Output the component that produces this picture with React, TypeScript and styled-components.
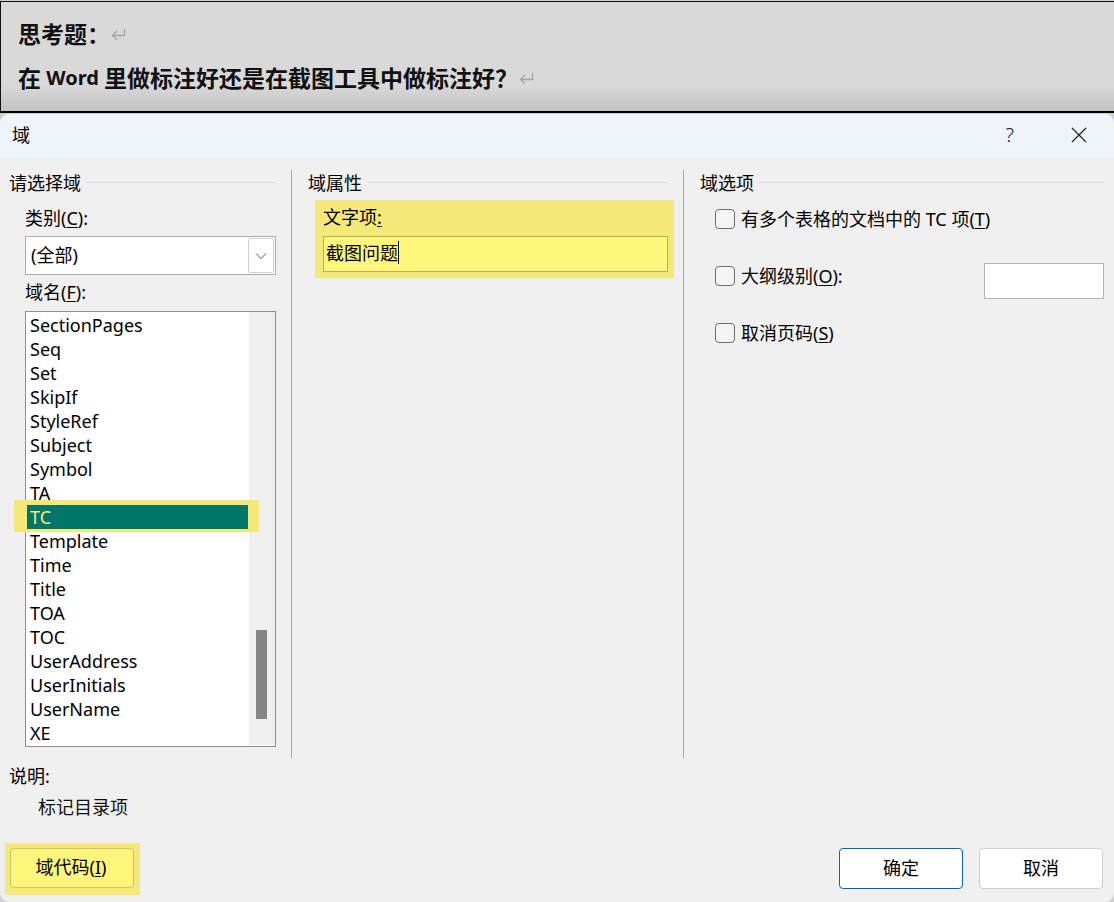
import React from 'react';
import styled, { createGlobalStyle } from 'styled-components';

const sans = `"Noto Sans", "Noto Sans CJK SC", sans-serif`;
const cjk = `"Noto Sans CJK SC", "Noto Sans", sans-serif`;

const Global = createGlobalStyle`
  html, body { margin: 0; padding: 0; background: #cfcfcf; overflow: hidden; }
  * { box-sizing: border-box; }
  #root { width: 1114px; height: 902px; }
`;

const Page = styled.div`
  width: 1114px;
  height: 902px;
  display: flex;
  flex-direction: column;
  font-family: ${sans};
  font-size: 18px;
  color: #000;
`;

const DocStrip = styled.section`
  height: 112px;
  flex: none;
  margin-top: 1px;
  padding: 9px 0 0 17px;
  border-top: 1px solid #111;
  border-left: 1px solid #111;
  border-bottom: 2px solid #000;
  background: linear-gradient(#d9d9d9 0, #d9d9d9 76%, #c3c3c3 100%);
`;

const DocLine = styled.div`
  height: 44px;
  display: flex;
  align-items: center;
  font-family: ${cjk};
  font-size: 23px;
  font-weight: 700;
  color: #111;
  white-space: pre;
`;

const DocLatin = styled.span`
  font-family: ${sans};
  font-size: 20px;
`;

const ReturnMark = styled.svg`
  flex: none;
  margin: 3px 0 0 1px;
`;

const Return = () => (
  <ReturnMark width="15" height="14" viewBox="0 0 15 14" fill="none" stroke="#a3a3a3" strokeWidth="1.3">
    <path d="M13.5 1V7.5H1.5" />
    <path d="M6 3L1.5 7.5L6 12" />
  </ReturnMark>
);

const Dialog = styled.main`
  flex: 1;
  margin-top: 1px;
  background: #f0f0f0;
  border-radius: 9px;
  display: flex;
  flex-direction: column;
  overflow: hidden;
`;

const TitleBar = styled.header`
  height: 44px;
  flex: none;
  display: flex;
  align-items: center;
  padding: 0 27px 2px 12px;
  background: #eff3fa;
  font-family: ${cjk};
  font-size: 18px;
`;

const TitleText = styled.span`
  flex: 1;
  padding-bottom: 2px;
`;

const HelpMark = styled.span`
  font-family: ${sans};
  font-size: 20px;
  font-weight: 300;
  margin-right: 57px;
  padding-bottom: 2px;
  color: #222;
`;

const Columns = styled.div`
  margin-top: 12px;
  height: 588px;
  flex: none;
  display: grid;
  grid-template-columns: 292px 392px 1fr;
`;

const Column = styled.div<{ $pad: string; $divider?: boolean }>`
  padding: ${p => p.$pad};
  border-right: ${p => (p.$divider ? '1px solid #a6a6a6' : 'none')};
  display: flex;
  flex-direction: column;
`;

const GroupTitle = styled.div`
  height: 24px;
  flex: none;
  display: flex;
  align-items: center;
  gap: 5px;
  font-family: ${cjk};
  font-size: 18px;
  white-space: nowrap;
  &::after {
    content: '';
    flex: 1;
    height: 1px;
    background: #dddddd;
  }
`;

const FieldLabel = styled.div<{ $top?: number }>`
  height: 24px;
  flex: none;
  line-height: 22px;
  margin-top: ${p => p.$top ?? 0}px;
  font-size: 18px;
  white-space: nowrap;
`;

const Indent = styled.div`
  margin-left: 16px;
  display: flex;
  flex-direction: column;
`;

const Select = styled.div`
  margin-top: 5px;
  height: 39px;
  background: #fff;
  border: 1px solid #ababab;
  display: flex;
  align-items: center;
  justify-content: space-between;
  padding: 1px 1px 1px 5px;
  font-size: 18px;
`;

const SelectValue = styled.span`
  padding-bottom: 4px;
`;

const SelectButton = styled.span`
  width: 26px;
  height: 35px;
  border: 1px solid #d0d0d0;
  border-radius: 2px;
  display: flex;
  align-items: center;
  justify-content: center;
`;

const List = styled.div`
  position: relative;
  margin-top: 6px;
  height: 436px;
  padding: 1px 27px 0 1px;
  background: #fff;
  border: 1px solid #8d8d96;
`;

const ListTrack = styled.div`
  position: absolute;
  top: 0;
  right: 0;
  bottom: 1px;
  width: 26px;
  background: #f0f0f0;
`;

const ListThumb = styled.div`
  position: absolute;
  top: 318px;
  left: 7px;
  width: 11px;
  height: 89px;
  background: #868686;
`;

const ListRow = styled.div<{ $selected?: boolean }>`
  position: relative;
  z-index: 1;
  height: 24px;
  line-height: 24px;
  padding-left: 3px;
  font-size: 18px;
  background: ${p => (p.$selected ? '#00766a' : 'transparent')};
  color: ${p => (p.$selected ? '#f3ec7c' : '#000')};
  white-space: nowrap;
  ${p =>
    p.$selected
      ? `&::before {
          content: '';
          position: absolute;
          inset: -5px -11px -3px -13px;
          border: solid #f3e878;
          border-width: 5px 11px 3px 13px;
          pointer-events: none;
        }`
      : ''}
`;

const MarkBox = styled.div`
  margin: 6px 0 0 7px;
  width: 359px;
  height: 78px;
  padding: 6px 6px 6px 8px;
  background: #f3e878;
  display: flex;
  flex-direction: column;
`;

const MarkInput = styled.div`
  margin-top: 6px;
  height: 36px;
  padding: 0 0 4px 2px;
  display: flex;
  align-items: center;
  background: #fff67c;
  border: 1px solid #b5ae5c;
  font-family: ${cjk};
  font-size: 18px;
`;

const Caret = styled.span`
  display: inline-block;
  width: 1px;
  height: 23px;
  background: #000;
`;

const OptionList = styled.div`
  margin: 7px 0 0 15px;
  display: flex;
  flex-direction: column;
  gap: 21px;
`;

const OptionRow = styled.label`
  height: 36px;
  display: flex;
  align-items: center;
  gap: 6px;
  font-size: 18px;
  white-space: nowrap;
`;

const OptionText = styled.span`
  padding-bottom: 2px;
`;

const CheckBox = styled.span`
  width: 20px;
  height: 20px;
  flex: none;
  background: #f5f5f5;
  border: 1px solid #6e6e6e;
  border-radius: 4px;
`;

const LevelInput = styled.div`
  width: 120px;
  height: 36px;
  margin: 5px 0 0 auto;
  align-self: flex-start;
  background: #fff;
  border: 1px solid #b4b4b4;
`;

const Description = styled.div`
  margin-top: 7px;
  padding-left: 9px;
  display: flex;
  flex-direction: column;
`;

const DescriptionText = styled.div`
  margin: 6px 0 0 29px;
  height: 24px;
  line-height: 22px;
  font-family: ${cjk};
  font-size: 18px;
  color: #111;
`;

const Footer = styled.footer`
  margin-top: 24px;
  padding: 0 11px 0 5px;
  display: flex;
  justify-content: space-between;
  align-items: flex-start;
`;

const MarkedButtonWrap = styled.div`
  padding: 5px 6px 7px 5px;
  background: #f3e878;
`;

const MarkedButton = styled.button`
  display: block;
  width: 124px;
  height: 40px;
  padding: 0 2px 4px 0;
  background: #fff67c;
  border: 1px solid #c5c56c;
  border-radius: 4px;
  font-family: ${sans};
  font-size: 18px;
  color: #000;
`;

const ActionGroup = styled.div`
  margin-top: 5px;
  display: flex;
  gap: 16px;
`;

const ActionButton = styled.button<{ $primary?: boolean }>`
  width: 124px;
  height: 41px;
  padding: 0 0 4px;
  background: #fff;
  border: 1px solid ${p => (p.$primary ? '#0067c0' : '#d0d0d0')};
  border-radius: 4px;
  font-family: ${cjk};
  font-size: 18px;
  color: #000;
`;

const Key = styled.u`
  text-underline-offset: 2px;
`;

const fields = [
  'SectionPages', 'Seq', 'Set', 'SkipIf', 'StyleRef', 'Subject', 'Symbol', 'TA', 'TC',
  'Template', 'Time', 'Title', 'TOA', 'TOC', 'UserAddress', 'UserInitials', 'UserName', 'XE',
];

export default function App() {
  return (
    <>
      <Global />
      <Page>
        <DocStrip>
          <DocLine>思考题：<Return /></DocLine>
          <DocLine>在<DocLatin> Word </DocLatin>里做标注好还是在截图工具中做标注好？<Return /></DocLine>
        </DocStrip>
        <Dialog>
          <TitleBar>
            <TitleText>域</TitleText>
            <HelpMark>?</HelpMark>
            <svg width="16" height="16" viewBox="0 0 16 16" stroke="#222" strokeWidth="1.2">
              <path d="M1 1L15 15M15 1L1 15" />
            </svg>
          </TitleBar>
          <Columns>
            <Column $pad="0 15px 0 9px" $divider>
              <GroupTitle>请选择域</GroupTitle>
              <Indent>
                <FieldLabel $top={13}>类别(<Key>C</Key>):</FieldLabel>
                <Select>
                  <SelectValue>(全部)</SelectValue>
                  <SelectButton>
                    <svg width="12" height="8" viewBox="0 0 12 8" fill="none" stroke="#555" strokeWidth="1">
                      <path d="M1 1.5L6 6.5L11 1.5" />
                    </svg>
                  </SelectButton>
                </Select>
                <FieldLabel $top={6}>域名(<Key>F</Key>):</FieldLabel>
                <List>
                  {fields.map(name => (
                    <ListRow key={name} $selected={name === 'TC'}>{name}</ListRow>
                  ))}
                  <ListTrack><ListThumb /></ListTrack>
                </List>
              </Indent>
            </Column>
            <Column $pad="0 15px 0 16px" $divider>
              <GroupTitle>域属性</GroupTitle>
              <MarkBox>
                <FieldLabel>文字项<Key>:</Key></FieldLabel>
                <MarkInput>截图问题<Caret /></MarkInput>
              </MarkBox>
            </Column>
            <Column $pad="0 10px 0 16px">
              <GroupTitle>域选项</GroupTitle>
              <OptionList>
                <OptionRow><CheckBox /><OptionText>有多个表格的文档中的 TC 项(<Key>T</Key>)</OptionText></OptionRow>
                <OptionRow>
                  <CheckBox /><OptionText>大纲级别(<Key>O</Key>):</OptionText>
                  <LevelInput />
                </OptionRow>
                <OptionRow><CheckBox /><OptionText>取消页码(<Key>S</Key>)</OptionText></OptionRow>
              </OptionList>
            </Column>
          </Columns>
          <Description>
            <FieldLabel>说明:</FieldLabel>
            <DescriptionText>标记目录项</DescriptionText>
          </Description>
          <Footer>
            <MarkedButtonWrap>
              <MarkedButton>域代码(<Key>I</Key>)</MarkedButton>
            </MarkedButtonWrap>
            <ActionGroup>
              <ActionButton $primary>确定</ActionButton>
              <ActionButton>取消</ActionButton>
            </ActionGroup>
          </Footer>
        </Dialog>
      </Page>
    </>
  );
}
